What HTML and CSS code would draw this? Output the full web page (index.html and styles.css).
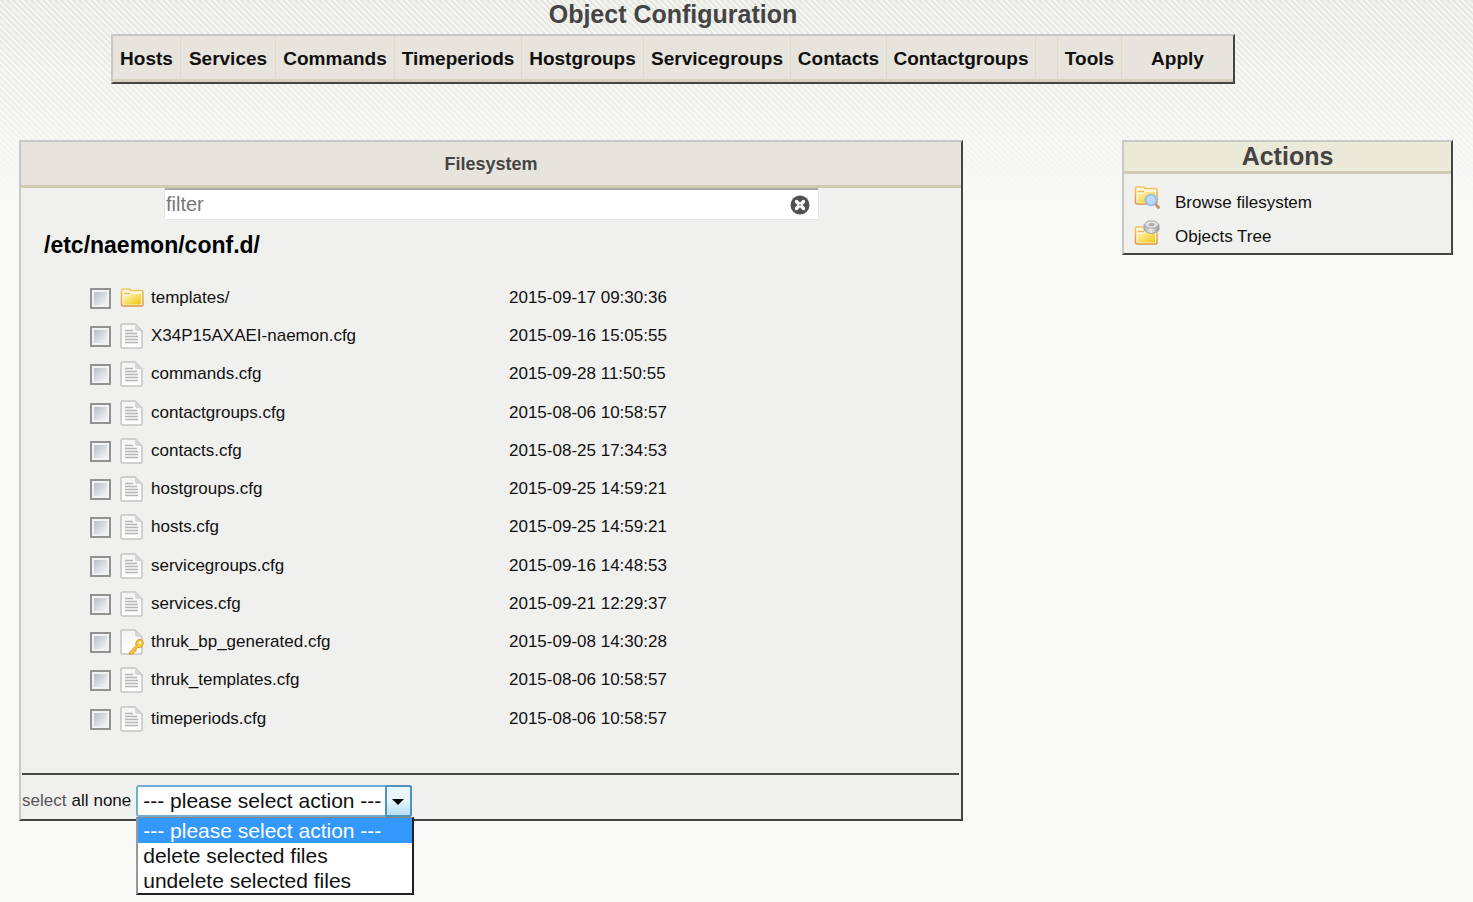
FILE: index.html
```html
<!DOCTYPE html>
<html lang="en">
<head>
<meta charset="utf-8">
<title>Object Configuration</title>
<link rel="stylesheet" href="styles.css">
</head>
<body>
<svg class="defs" width="0" height="0" aria-hidden="true">
  <defs>
    <linearGradient id="gold" x1="0" y1="0" x2="1" y2="1"><stop offset="0" stop-color="#fdf3c0"/><stop offset="1" stop-color="#f0c80c"/></linearGradient>
    <linearGradient id="goldEdge" x1="0" y1="0" x2="0" y2="1"><stop offset="0" stop-color="#ecc56c"/><stop offset="1" stop-color="#dc9440"/></linearGradient>
    <linearGradient id="sheet" x1="0" y1="0" x2="0" y2="1"><stop offset="0" stop-color="#f4f4f4"/><stop offset="1" stop-color="#ffffff"/></linearGradient>
    <linearGradient id="steel" x1="0" y1="0" x2="1" y2="0"><stop offset="0" stop-color="#a9a9a9"/><stop offset=".45" stop-color="#e8e8e8"/><stop offset="1" stop-color="#9a9a9a"/></linearGradient>
    <symbol id="folder" viewBox="0 0 24 20">
      <path d="M1.500 2.500q0-1.500 1.500-1.500h6q1 0 1.500 1l.5.5h10.500q1.500 0 1.500 1.500v12.500q0 1.500-1.500 1.500h-18q-2 0-2-1.500z" fill="#fff6d2" stroke="url(#goldEdge)" stroke-width="1.500"/>
      <path d="M3.500 8h6l2-2h9.500v10.500h-17.500z" fill="url(#gold)"/>
      <path d="M4 5.500h6" stroke="#e9b95c" stroke-width="1.500"/>
    </symbol>
    <symbol id="page" viewBox="0 0 24 26">
      <path d="M1 2.500q0-1.500 1.500-1.500h12.500l7 7v15.500q0 1.500-1.500 1.500h-18q-1.500 0-1.500-1.500z" fill="url(#sheet)" stroke="#c3c3c3" stroke-width="1.500"/>
      <path d="M15 1v5q0 2 2 2h5z" fill="#d6d6d6"/>
    </symbol>
    <symbol id="file" viewBox="0 0 24 26">
      <use href="#page"/>
      <path d="M5 7.500h8M5 10.500h12M5 13.500h13M5 16.500h13M5 19.500h13" stroke="#b5b5b5" stroke-width="1.300"/>
    </symbol>
    <symbol id="file-key" viewBox="0 0 24 26">
      <use href="#page"/>
      <path d="M9 24l7-7.500q-1-3.500 1.500-5.500t5 .5q2 3-.5 6-2 2-4.500 1l-1.500 1.500v2h-2v1.500l-1.500 1.500h-3.500z" fill="#f5c637" stroke="#d99a35"/>
      <circle cx="20" cy="13.800" r="1.300" fill="#fff"/>
    </symbol>
  </defs>
</svg>

<header class="top">
  <h1 class="title">Object Configuration</h1>
  <nav class="menu" aria-label="Object types">
    <a href="#">Hosts</a>
    <a href="#">Services</a>
    <a href="#">Commands</a>
    <a href="#">Timeperiods</a>
    <a href="#">Hostgroups</a>
    <a href="#">Servicegroups</a>
    <a href="#">Contacts</a>
    <a href="#">Contactgroups</a>
    <span></span>
    <a href="#">Tools</a>
    <a href="#">Apply</a>
  </nav>
</header>

<main class="columns">
  <form class="panel files">
    <h2 class="files-head">Filesystem</h2>
    <div class="filter">
      <input class="filter-input" type="text" placeholder="filter" aria-label="filter">
      <button class="clear" type="button" aria-label="Clear filter">
        <svg viewBox="0 0 20 20" width="20" height="20"><circle cx="10" cy="10" r="9.500" fill="#505050"/><path d="M6.500 6.500l7 7M13.500 6.500l-7 7" stroke="#fff" stroke-width="3.500" stroke-linecap="round"/><circle cx="10" cy="10" r="1.200" fill="#aaa"/></svg>
      </button>
    </div>
    <h3 class="path">/etc/naemon/conf.d/</h3>
    <table class="list">
      <tbody>
        <tr><td class="pick"><input type="checkbox" aria-label="templates/"></td><td class="icon"><svg width="24" height="20"><use href="#folder"/></svg></td><td class="name"><a href="#">templates/</a></td><td>2015-09-17 09:30:36</td></tr>
        <tr><td class="pick"><input type="checkbox" aria-label="X34P15AXAEI-naemon.cfg"></td><td class="icon"><svg width="24" height="26"><use href="#file"/></svg></td><td class="name"><a href="#">X34P15AXAEI-naemon.cfg</a></td><td>2015-09-16 15:05:55</td></tr>
        <tr><td class="pick"><input type="checkbox" aria-label="commands.cfg"></td><td class="icon"><svg width="24" height="26"><use href="#file"/></svg></td><td class="name"><a href="#">commands.cfg</a></td><td>2015-09-28 11:50:55</td></tr>
        <tr><td class="pick"><input type="checkbox" aria-label="contactgroups.cfg"></td><td class="icon"><svg width="24" height="26"><use href="#file"/></svg></td><td class="name"><a href="#">contactgroups.cfg</a></td><td>2015-08-06 10:58:57</td></tr>
        <tr><td class="pick"><input type="checkbox" aria-label="contacts.cfg"></td><td class="icon"><svg width="24" height="26"><use href="#file"/></svg></td><td class="name"><a href="#">contacts.cfg</a></td><td>2015-08-25 17:34:53</td></tr>
        <tr><td class="pick"><input type="checkbox" aria-label="hostgroups.cfg"></td><td class="icon"><svg width="24" height="26"><use href="#file"/></svg></td><td class="name"><a href="#">hostgroups.cfg</a></td><td>2015-09-25 14:59:21</td></tr>
        <tr><td class="pick"><input type="checkbox" aria-label="hosts.cfg"></td><td class="icon"><svg width="24" height="26"><use href="#file"/></svg></td><td class="name"><a href="#">hosts.cfg</a></td><td>2015-09-25 14:59:21</td></tr>
        <tr><td class="pick"><input type="checkbox" aria-label="servicegroups.cfg"></td><td class="icon"><svg width="24" height="26"><use href="#file"/></svg></td><td class="name"><a href="#">servicegroups.cfg</a></td><td>2015-09-16 14:48:53</td></tr>
        <tr><td class="pick"><input type="checkbox" aria-label="services.cfg"></td><td class="icon"><svg width="24" height="26"><use href="#file"/></svg></td><td class="name"><a href="#">services.cfg</a></td><td>2015-09-21 12:29:37</td></tr>
        <tr><td class="pick"><input type="checkbox" aria-label="thruk_bp_generated.cfg"></td><td class="icon"><svg width="24" height="26"><use href="#file-key"/></svg></td><td class="name"><a href="#">thruk_bp_generated.cfg</a></td><td>2015-09-08 14:30:28</td></tr>
        <tr><td class="pick"><input type="checkbox" aria-label="thruk_templates.cfg"></td><td class="icon"><svg width="24" height="26"><use href="#file"/></svg></td><td class="name"><a href="#">thruk_templates.cfg</a></td><td>2015-08-06 10:58:57</td></tr>
        <tr><td class="pick"><input type="checkbox" aria-label="timeperiods.cfg"></td><td class="icon"><svg width="24" height="26"><use href="#file"/></svg></td><td class="name"><a href="#">timeperiods.cfg</a></td><td>2015-08-06 10:58:57</td></tr>
      </tbody>
    </table>
    <div class="bulk">
      <span class="bulk-label">select</span>
      <a href="#">all</a>
      <a href="#">none</a>
      <div class="dropdown">
        <select class="action" aria-label="Action">
          <option>--- please select action ---</option>
          <option>delete selected files</option>
          <option>undelete selected files</option>
        </select>
        <span class="arrow" aria-hidden="true"></span>
        <ul class="options" role="listbox" aria-label="Action choices">
          <li class="current" role="option" aria-selected="true">--- please select action ---</li>
          <li role="option">delete selected files</li>
          <li role="option">undelete selected files</li>
        </ul>
      </div>
    </div>
  </form>

  <aside class="panel actions">
    <h2 class="actions-head">Actions</h2>
    <ul class="links">
      <li><svg width="26" height="24" viewBox="0 0 26 24"><use href="#folder" width="24" height="20"/><path d="M20.500 17l4 4.500" stroke="#c9946a" stroke-width="3" stroke-linecap="round"/><circle cx="17" cy="14" r="5.500" fill="#b9d9f8" stroke="#8fbce8" stroke-width="1.500"/></svg><a href="#">Browse filesystem</a></li>
      <li><svg width="26" height="26" viewBox="0 0 26 26"><use href="#folder" y="6" width="24" height="20"/><path d="M10 4.500v5.500q3 3.500 7.500 3.500t7.500-3.500v-5.500z" fill="url(#steel)" stroke="#a6a6a6"/><path d="M10 4.500l4-3.500h7l4 3.500-4 3.500h-7z" fill="#e2e2e2" stroke="#a6a6a6"/><ellipse cx="17.500" cy="4.500" rx="3" ry="1.500" fill="#aaa"/></svg><a href="#">Objects Tree</a></li>
    </ul>
  </aside>
</main>
</body>
</html>
```
FILE: styles.css
```css
* { box-sizing: border-box; }

body {
  margin: 0;
  min-height: 100vh;
  font: 17px/20px "Liberation Sans", Arial, sans-serif;
  color: #111;
  background:
    linear-gradient(rgba(249, 249, 247, 0), #f9f9f7 210px),
    linear-gradient(45deg, #e6e6e1 25%, #f5f5f1 25% 50%, #e6e6e1 50% 75%, #f5f5f1 75%) 0 0 / 6px 6px;
}

a { color: inherit; text-decoration: none; }
h1, h2, h3, ul { margin: 0; padding: 0; }
ul { list-style: none; }
.defs { position: absolute; }

.top { padding: 0 238px 0 111px; }

.title {
  padding-bottom: 6px;
  font-size: 25px;
  line-height: 28px;
  color: #444;
  text-align: center;
}

.menu {
  display: grid;
  grid-template-columns: 68fr 95fr 119fr 127fr 122fr 147fr 96fr 149fr 22fr 64fr 111fr;
  border: 2px solid #444;
  border-top-color: #c8c8c8;
  border-left-color: #c8c8c8;
  background: #e7e4dd;
}

.menu > * {
  padding: 13px 0 10px;
  border-right: 1px solid #dfdac6;
  border-bottom: 3px solid #d6d2bb;
  font-size: 19px;
  line-height: 20px;
  font-weight: bold;
  text-align: center;
  white-space: nowrap;
}

.menu > :last-child { border-right: 0; }

.columns {
  display: grid;
  grid-template-columns: 944fr 331fr;
  column-gap: 159px;
  align-items: start;
  padding: 56px 20px 0 19px;
}

.panel {
  border: 2px solid #444;
  border-top-color: #c8c8c8;
  border-left-color: #c8c8c8;
  background: #f0f0ee;
}

.files-head {
  padding: 12px 0 11px;
  border-bottom: 3px solid #cfcab0;
  background: #e7e4dd;
  font-size: 18px;
  line-height: 20px;
  color: #444;
  text-align: center;
}

.filter {
  display: flex;
  align-items: center;
  width: 655px;
  margin-left: 143px;
  border: 1px solid #e2e6ef;
  border-top: 2px solid #a9a9a9;
  border-radius: 2px;
  background: #fff;
}

.filter-input {
  flex: 1;
  min-width: 0;
  height: 29px;
  padding: 0 1px;
  border: 0;
  background: none;
  font: 20px/28px "Liberation Sans", Arial, sans-serif;
}

.filter-input::placeholder { color: #777; opacity: 1; }

.clear {
  display: flex;
  margin-right: 8px;
  padding: 0;
  border: 0;
  background: none;
}

.path {
  padding: 11px 0 20px 23px;
  font-size: 23px;
  line-height: 28px;
  color: #000;
}

.list {
  margin-left: 69px;
  border-collapse: collapse;
}

.list tr { height: 38px; }
.list tr:nth-child(4n) { height: 39px; }
.list td { padding: 0; vertical-align: middle; }
.list .pick { width: 30px; padding-top: 1px; }
.list .icon { width: 31px; }
.list .name { width: 358px; }
.list svg { display: block; }

.pick input {
  display: block;
  appearance: none;
  width: 21px;
  height: 21px;
  margin: 0;
  padding: 2px;
  border: 2px solid #929292;
  background: linear-gradient(135deg, #b9bfc8, #f4f5f6) content-box, #f2f2f2;
}

.bulk {
  display: flex;
  align-items: center;
  gap: 5px;
  margin: 35px 2px 0 1px;
  padding: 10px 0 2px;
  border-top: 2px solid #484848;
}

.bulk-label { color: #555; }

.dropdown { position: relative; width: 276px; }

.action {
  appearance: none;
  display: block;
  width: 100%;
  height: 32px;
  padding: 0 0 0 5px;
  border: 2px solid #72aed2;
  border-radius: 3px;
  background: #fff;
  font: 21px/28px "Liberation Sans", Arial, sans-serif;
  color: #111;
}

.arrow {
  position: absolute;
  top: 0;
  right: 0;
  width: 27px;
  height: 32px;
  border: 2px solid #4f93bd;
  border-radius: 0 3px 3px 0;
  background: linear-gradient(#e9f6fd 45%, #b5def5);
  pointer-events: none;
}

.arrow::after {
  content: "";
  position: absolute;
  left: 5px;
  top: 12px;
  border: 6px solid transparent;
  border-top-color: #000;
  border-bottom: 0;
}

.options {
  position: absolute;
  top: 32px;
  left: 0;
  width: 278px;
  border: 2px solid #222;
  border-left-color: #999;
  border-top: 1px solid #888;
  background: #fff;
  font-size: 21px;
  line-height: 25px;
  white-space: nowrap;
}

.options li { padding-left: 5px; }
.options .current { background: #3399ff; color: #fff; }

.actions-head {
  border-bottom: 3px solid #cfcbb2;
  background: #ebe9d8;
  font-size: 25px;
  line-height: 29px;
  color: #444;
  text-align: center;
}

.links { padding: 12px 10px 1px; }

.links li {
  display: flex;
  align-items: center;
  gap: 15px;
  height: 32px;
}

.links li + li { margin-top: 2px; }
.links svg { align-self: flex-start; }
.links a { padding-top: 2px; }
```
